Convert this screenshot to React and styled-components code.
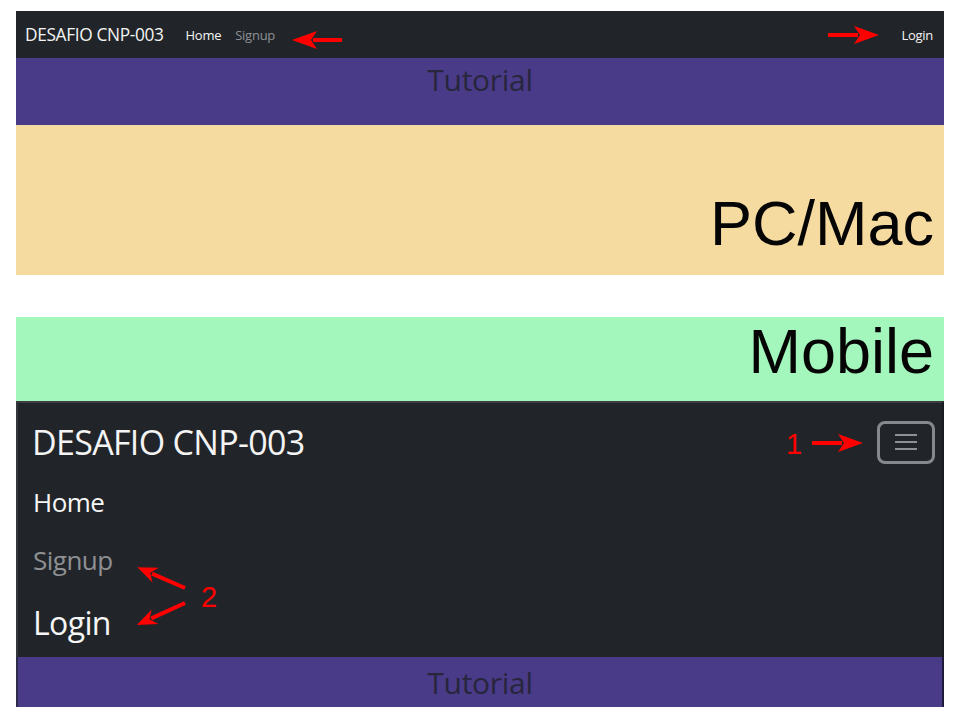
import styled, { createGlobalStyle } from "styled-components";

const GlobalStyle = createGlobalStyle`
  body {
    margin: 0;
    background: #fff;
  }
`;

const Page = styled.div`
  position: relative;
  width: 960px;
  height: 720px;
  padding: 11px 16px 0;
  box-sizing: border-box;
  font-family: "Open Sans", "Noto Sans", sans-serif;
  overflow: hidden;
`;

const TopNav = styled.nav`
  height: 47px;
  background: #212529;
  display: flex;
  align-items: center;
  padding: 0 11px 0 9px;
`;

const Brand = styled.span`
  color: #f4f4f4;
  font-size: ${({ $size }) => $size}px;
  letter-spacing: -0.02em;
`;

const NavLinks = styled.div`
  display: flex;
  gap: 14px;
  margin-left: 22px;
  flex: 1;
`;

const NavLink = styled.span`
  font-size: 13px;
  color: ${({ $muted }) => ($muted ? "#8e9094" : "#f4f4f4")};
  letter-spacing: -0.02em;
`;

const TutorialBar = styled.div`
  height: ${({ $h }) => $h}px;
  background: #4a3b89;
  display: flex;
  justify-content: center;
  color: #27263c;
  font-size: 30px;
  line-height: ${({ $lh }) => $lh}px;
  letter-spacing: -0.01em;
  border-right: ${({ $edge }) => ($edge ? "2px solid #1e1c3a" : "none")};
  border-left: ${({ $edge }) => ($edge ? "2px solid #2e2c48" : "none")};
`;

const Label = styled.div`
  height: ${({ $h }) => $h}px;
  box-sizing: border-box;
  background: ${({ $bg }) => $bg};
  display: flex;
  justify-content: flex-end;
  align-items: ${({ $align }) => $align};
  padding: ${({ $pt }) => $pt || 0}px 10px ${({ $pb }) => $pb || 0}px 0;
  margin-top: ${({ $mt }) => $mt || 0}px;
  font-family: "Liberation Sans", Arial, sans-serif;
  font-size: 63px;
  color: #050505;
  line-height: 1;
`;

const MobileNav = styled.nav`
  height: 256px;
  box-sizing: border-box;
  background: #212529;
  border-top: 2px solid #3a3d42;
  border-left: 2px solid #34373c;
  border-right: 2px solid #1a1c20;
  padding: 16px 7px 0 14px;
`;

const MobileHeader = styled.div`
  display: flex;
  justify-content: space-between;
  align-items: center;
`;

const Toggler = styled.div`
  width: 58px;
  height: 43px;
  box-sizing: border-box;
  border: 3px solid #85888c;
  border-radius: 8px;
  display: flex;
  flex-direction: column;
  justify-content: center;
  align-items: center;
  gap: 5px;
`;

const TogglerLine = styled.span`
  width: 22px;
  height: 2px;
  background: #8d9094;
`;

const MobileList = styled.div`
  display: flex;
  flex-direction: column;
  margin-top: 8px;
  padding-left: 1px;
`;

const MobileLink = styled.span`
  font-size: ${({ $size }) => $size}px;
  line-height: ${({ $lh }) => $lh}px;
  color: ${({ $muted }) => ($muted ? "#8e9094" : "#f6f6f6")};
  letter-spacing: -0.02em;
`;

const RedText = styled.span`
  position: absolute;
  left: ${({ $x }) => $x}px;
  top: ${({ $y }) => $y}px;
  font-family: "Liberation Sans", Arial, sans-serif;
  font-size: 29px;
  line-height: 1;
  color: #f00;
`;

const ArrowSvg = styled.svg`
  position: absolute;
  left: ${({ $x }) => $x}px;
  top: ${({ $y }) => $y - 10}px;
  transform-origin: 0 50%;
  transform: rotate(${({ $angle }) => $angle}deg);
  overflow: visible;
`;

function Arrow({ x, y, angle, len, head = 25, half = 9 }) {
  return (
    <ArrowSvg $x={x} $y={y} $angle={angle} width={len} height={20}>
      <line x1="0" y1="10" x2={len - head + 4} y2="10" stroke="#f00" strokeWidth="4" />
      <polygon
        points={`${len},10 ${len - head},${10 - half} ${len - head + 6},10 ${len - head},${10 + half}`}
        fill="#f00"
      />
    </ArrowSvg>
  );
}

export default function App() {
  return (
    <Page>
      <GlobalStyle />
      <TopNav>
        <Brand $size={17.3}>DESAFIO CNP-003</Brand>
        <NavLinks>
          <NavLink>Home</NavLink>
          <NavLink $muted>Signup</NavLink>
        </NavLinks>
        <NavLink>Login</NavLink>
      </TopNav>
      <TutorialBar $h={67} $lh={44}>Tutorial</TutorialBar>
      <Label $h={150} $bg="#f6dba0" $align="flex-end" $pb={20}>
        PC/Mac
      </Label>
      <Label $h={84} $bg="#a3f7bd" $mt={42} $align="center" $pb={16}>
        Mobile
      </Label>
      <MobileNav>
        <MobileHeader>
          <Brand $size={34}>DESAFIO CNP-003</Brand>
          <Toggler>
            <TogglerLine />
            <TogglerLine />
            <TogglerLine />
          </Toggler>
        </MobileHeader>
        <MobileList>
          <MobileLink $size={26} $lh={58}>Home</MobileLink>
          <MobileLink $size={26} $lh={58} $muted>Signup</MobileLink>
          <MobileLink $size={32} $lh={68}>Login</MobileLink>
        </MobileList>
      </MobileNav>
      <TutorialBar $h={50} $lh={52} $edge>Tutorial</TutorialBar>

      <Arrow x={342} y={40} angle={180} len={50} />
      <Arrow x={828} y={35} angle={0} len={51} />
      <RedText $x={786} $y={430}>1</RedText>
      <Arrow x={812} y={443} angle={0} len={51} />
      <RedText $x={201} $y={583}>2</RedText>
      <Arrow x={185} y={588} angle={203.6} len={52} head={20} half={8} />
      <Arrow x={185} y={603} angle={155.4} len={53} head={20} half={8} />
    </Page>
  );
}
